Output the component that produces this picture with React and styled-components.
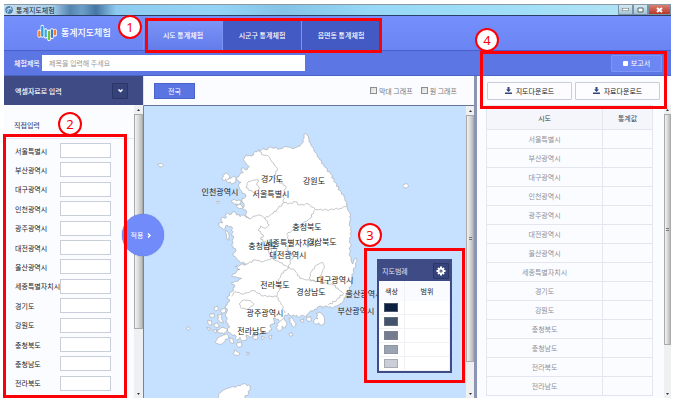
import React from 'react';
import styled, { createGlobalStyle } from 'styled-components';

const NAVY = '#3e4b84';
const RED = '#fb0007';

const GlobalStyle = createGlobalStyle`
  * { box-sizing: border-box; }
  body { margin: 0; background: #fff; }
  body, button, input, table {
    font-family: "Noto Sans CJK KR", "Noto Sans", sans-serif;
    font-size: 7px;
    line-height: 10px;
    color: #222;
  }
  button { padding: 0; border: 0; cursor: pointer; }
`;

const Frame = styled.div`
  height: 100vh;
  padding: 4px 4px 3px;
  display: flex;
  flex-direction: column;
`;

/* ---------- title bar ---------- */
const TitleBar = styled.header`
  flex: none;
  height: 12px;
  display: flex;
  align-items: center;
  gap: 3px;
  padding-left: 1px;
  border-top: 1px solid #8a9aa5;
  border-bottom: 1px solid #2b3f66;
  background: linear-gradient(90deg, #c3dcf0 0, #a9cfec 48px, #5585b0 66px, #6b9fc8 78px, #4676a5 92px, #8ecbf0 112px, #93d3f5 32%, #84c3e6 42%, #96d8f6 55%, #a3e0f7 80%, #b9e3f3 100%);
`;
const TitleText = styled.h1`
  flex: 1;
  margin: 0;
  font-size: 7px;
  font-weight: 400;
  line-height: 9px;
  color: #222;
`;
const WindowButtons = styled.div`
  display: flex;
  align-self: stretch;
`;
const WindowButton = styled.button`
  width: ${(p) => (p.$close ? 23 : 15)}px;
  display: grid;
  place-items: center;
  border: 1px solid #7893a6;
  border-top: 0;
  background: ${(p) => (p.$close ? 'linear-gradient(#d98072, #b9372b)' : 'linear-gradient(#d5e9f3, #a3c3d6)')};
`;

/* ---------- brand and tabs ---------- */
const Brand = styled.div`
  flex: none;
  height: 35px;
  display: flex;
  background: linear-gradient(#758ffb, #6a84f3);
  border-bottom: 1px solid #4a60c8;
`;
const Logo = styled.div`
  width: 139px;
  display: flex;
  align-items: center;
  gap: 4px;
  padding: 0 0 1px 33px;
  color: #fff;
  font-size: 9px;
  line-height: 14px;
  font-weight: 500;
`;
const TabsArea = styled.div`
  position: relative;
  padding-top: 4px;
`;
const Tabs = styled.nav`
  height: 30px;
  display: flex;
`;
const Tab = styled.button`
  width: 79px;
  border-radius: 3px 3px 0 0;
  border-left: 1px solid #7c94f5;
  font-weight: 500;
  color: #fff;
  background: ${(p) => (p.$active ? 'linear-gradient(#7d94f7, #627cea)' : '#4359c4')};
`;

/* ---------- subject bar ---------- */
const SubjectBar = styled.div`
  flex: none;
  height: 25px;
  display: flex;
  align-items: center;
  gap: 4px;
  padding: 0 9px 0 10px;
  background: #5c77e3;
  border-bottom: 1px solid #4c63c6;
`;
const SubjectLabel = styled.label`
  width: 24px;
  color: #fff;
  font-weight: 500;
  white-space: nowrap;
`;
const SubjectInput = styled.input`
  width: 263px;
  height: 16px;
  padding: 0 7px;
  border: 0;
  background: #fff;
  &::placeholder { color: #999; opacity: 1; }
`;
const ReportButton = styled.button`
  width: 51px;
  height: 17px;
  margin-left: auto;
  display: flex;
  align-items: center;
  justify-content: center;
  gap: 3px;
  border: 1px solid #7f95f3;
  border-radius: 1px;
  background: #6c86f3;
  color: #fff;
`;
const ReportDot = styled.span`
  width: 5px;
  height: 5px;
  border-radius: 1px;
  background: #fff;
`;

/* ---------- columns ---------- */
const Columns = styled.main`
  flex: 1;
  min-height: 0;
  display: grid;
  grid-template-columns: 139px minmax(0, 1fr) 194px;
`;
const Column = styled.section`
  position: relative;
  min-height: 0;
  display: flex;
  flex-direction: column;
  background: #fbfcff;
  border-right: ${(p) => (p.$divided ? '3px solid #8b94b3' : '0')};
`;
const ScrollRow = styled.div`
  flex: 1;
  min-height: 0;
  display: flex;
`;

/* ---------- scroll bar ---------- */
const Track = styled.div`
  flex: none;
  width: ${(p) => p.$width}px;
  display: flex;
  flex-direction: column;
  background: #eff0f1;
`;
const Arrow = styled.span`
  flex: none;
  height: 9px;
  display: grid;
  place-items: center;
`;
const Thumb = styled.span`
  flex: ${(p) => p.$share} 0 0;
  display: grid;
  place-items: center;
  border: 1px solid #aaa;
  background: linear-gradient(90deg, #f2f2f2, #dcdcdc 45%, #b9b9b9);
`;
const Rest = styled.span`
  flex: ${(p) => p.$share} 0 0;
`;
const Grip = styled.span`
  width: 3px;
  height: 3px;
  border-top: 1px solid #777;
  border-bottom: 1px solid #777;
`;

/* ---------- input panel ---------- */
const ExcelHeader = styled.div`
  flex: none;
  height: 29px;
  display: flex;
  align-items: center;
  justify-content: space-between;
  padding: 0 15px 0 11px;
  background: ${NAVY};
  color: #fff;
  font-weight: 500;
`;
const SquareButton = styled.button`
  width: 16px;
  height: 16px;
  display: grid;
  place-items: center;
  border: 1px solid #2a3568;
  border-radius: 1px;
  background: #36437b;
`;
const FormArea = styled.div`
  flex: 1;
  display: flex;
  flex-direction: column;
`;
const FormTitle = styled.h2`
  flex: none;
  height: 34px;
  margin: 0;
  padding: 15px 0 0 10px;
  font-size: 7px;
  line-height: 10px;
  font-weight: 500;
  color: ${NAVY};
  border-bottom: 1px solid #e6e9f2;
`;
const RegionForm = styled.form`
  position: relative;
  flex: 1;
  display: flex;
  flex-direction: column;
  justify-content: space-between;
  padding: 4px 0 7px 11px;
`;
const RegionRow = styled.div`
  display: grid;
  grid-template-columns: 45px 51px;
  align-items: center;
`;
const RegionLabel = styled.label`
  white-space: nowrap;
`;
const RegionInput = styled.input`
  width: 100%;
  height: 15px;
  padding: 0 3px;
  border: 1px solid #c9cedb;
  background: #fff;
`;
const ApplyButton = styled.button`
  position: absolute;
  z-index: 2;
  right: -21px;
  top: 138px;
  width: 42px;
  height: 42px;
  display: flex;
  align-items: center;
  justify-content: center;
  gap: 4px;
  padding-right: 4px;
  border-radius: 50%;
  background: #728bfa;
  box-shadow: 0 0 1px #4d62b8;
  color: #fff;
`;

/* ---------- map panel ---------- */
const MapToolbar = styled.div`
  flex: none;
  height: 30px;
  display: flex;
  align-items: center;
  gap: 8px;
  padding: 0 17px 0 10px;
  border-left: 1px solid #dde1ee;
  border-bottom: 1px solid #68739c;
`;
const NationButton = styled.button`
  width: 41px;
  height: 16px;
  margin-right: auto;
  border: 1px solid #4b63cb;
  background: #5a74e2;
  color: #fff;
`;
const GraphOption = styled.label`
  display: flex;
  align-items: center;
  gap: 2px;
  color: #777;
`;
const CheckBox = styled.input`
  appearance: none;
  width: 7px;
  height: 7px;
  margin: 0;
  border: 1px solid #8d8d8d;
  background: linear-gradient(135deg, #d5d8da, #f8f8f8);
  &:checked { background: ${NAVY}; }
`;
const Sea = styled.div`
  position: relative;
  flex: 1;
  min-width: 0;
  overflow: hidden;
  display: flex;
  justify-content: center;
  border-left: 1px solid #7782ab;
  background: #c6e0ff;
`;
const MapCanvas = styled.div`
  position: relative;
  flex: none;
  width: 324px;
  height: 292px;
`;
const MapLabel = styled.span`
  position: absolute;
  left: ${(p) => p.$x}px;
  top: ${(p) => p.$y}px;
  transform: translate(-50%, -50%);
  font-size: 8px;
  line-height: 10px;
  white-space: nowrap;
  color: #222;
`;

/* ---------- legend ---------- */
const LegendArea = styled.div`
  position: absolute;
  z-index: 2;
  right: 22px;
  bottom: 25px;
  width: 75px;
`;
const LegendCard = styled.div`
  border: 2px solid ${NAVY};
  background: #fff;
`;
const LegendHeader = styled.div`
  height: 20px;
  display: flex;
  align-items: center;
  justify-content: space-between;
  padding: 0 1px 0 3px;
  background: ${NAVY};
  color: #dfe4f8;
`;
const LegendTable = styled.table`
  width: 100%;
  table-layout: fixed;
  border-collapse: collapse;
`;
const LegendHead = styled.th`
  width: ${(p) => p.$width};
  height: 20px;
  padding: 0;
  font-weight: 400;
  background: #fafbff;
  border-right: 1px solid #f0f1f5;
`;
const LegendCell = styled.td`
  height: 14px;
  padding: 0 0 0 5px;
  border-right: 1px solid #f0f1f5;
  border-bottom: 1px solid #f0f1f5;
`;
const Swatch = styled.span`
  display: block;
  width: 14px;
  height: 9px;
  border: 1px solid rgba(130, 135, 150, 0.5);
  background: ${(p) => p.$color};
`;

/* ---------- result panel ---------- */
const Downloads = styled.div`
  flex: none;
  height: 29px;
  display: grid;
  grid-template-columns: 1fr 1fr;
  align-items: center;
  gap: 3px;
  padding: 0 11px 0 10px;
`;
const DownloadButton = styled.button`
  height: 18px;
  display: flex;
  align-items: center;
  justify-content: center;
  gap: 4px;
  border: 1px solid #c8cddb;
  border-radius: 1px;
  background: #fdfdff;
`;
const TableArea = styled.div`
  flex: 1;
  min-width: 0;
  overflow: hidden;
  padding: 0 11px 0 9px;
`;
const ResultTable = styled.table`
  width: 100%;
  table-layout: fixed;
  border-collapse: collapse;
  text-align: center;
`;
const ResultHead = styled.th`
  width: ${(p) => p.$width};
  height: 24px;
  padding: 0;
  font-weight: 400;
  color: #444;
  background: #f5f6fb;
  border: 1px solid #e4e6ef;
`;
const ResultCell = styled.td`
  height: 19px;
  padding: 0;
  color: #8e9098;
  border: 1px solid #e4e6ef;
`;

/* ---------- numbered call-outs ---------- */
const Callout = styled.div`
  position: absolute;
  z-index: 5;
  top: ${(p) => p.$top}px;
  right: ${(p) => p.$right}px;
  bottom: ${(p) => p.$bottom};
  left: ${(p) => p.$left}px;
  height: ${(p) => p.$height || 'auto'};
  border: 3px solid ${RED};
  pointer-events: none;
`;
const Badge = styled.span`
  position: absolute;
  left: ${(p) => p.$x}px;
  top: ${(p) => p.$y}px;
  width: 24px;
  height: 24px;
  display: grid;
  place-items: center;
  border: 2px solid ${RED};
  border-radius: 50%;
  background: #fff;
  color: ${RED};
  font-family: "Noto Sans", sans-serif;
  font-size: 13px;
  line-height: 16px;
`;

const REGIONS = [
  '서울특별시', '부산광역시', '대구광역시', '인천광역시', '광주광역시',
  '대전광역시', '울산광역시', '세종특별자치시', '경기도', '강원도',
  '충청북도', '충청남도', '전라북도', '전라남도',
];

const MAP_LABELS = [
  ['경기도', 129, 73], ['강원도', 171, 75], ['인천광역시', 77, 86], ['서울특별시', 128, 88],
  ['충청북도', 164, 121], ['충청남도', 120, 140], ['세종특별자치시', 148, 137], ['경상북도', 179, 136],
  ['대전광역시', 145, 149], ['전라북도', 132, 179], ['대구광역시', 192, 174], ['경상남도', 168, 186],
  ['울산광역시', 221, 188], ['부산광역시', 213, 205], ['광주광역시', 122, 207], ['전라남도', 109, 225],
];

const LEGEND_COLORS = ['#0c2040', '#435369', '#747c8f', '#9ba4b3', '#cbced6'];

const COAST = '497,100 505,108 507,125 516,140 526,158 540,180 556,203 572,222 586,248 600,272 612,290 620,312 622,325 632,345 629,370 634,395 630,420 631,440 628,460 633,480 638,492 646,474 650,478 647,495 640,512 637,530 634,550 628,570 618,585 612,600 605,610 590,618 575,624 560,618 548,625 540,618 530,628 515,632 505,640 498,650 485,645 475,652 470,645 455,648 445,640 432,652 425,668 415,658 400,655 405,670 390,675 395,690 380,700 370,695 360,705 345,700 330,712 318,705 320,720 305,722 300,712 290,720 285,705 272,700 262,690 270,680 258,668 262,655 255,645 262,632 255,618 268,605 262,590 275,575 285,560 275,548 290,545 305,535 285,530 275,528 290,515 300,508 285,500 300,495 320,492 300,485 292,478 278,462 288,452 275,435 280,415 276,400 278,385 262,375 250,388 238,380 235,370 248,368 243,355 260,352 258,342 275,342 282,335 300,350 310,345 328,357 315,345 320,335 308,325 312,312 300,305 312,295 318,285 308,280 300,268 295,255 303,247 288,238 298,225 310,218 305,205 322,208 328,200 318,190 310,178 318,165 335,168 345,155 355,150 375,148 395,142 420,146 440,140 462,145 480,138 490,125 492,108';

const BORDERS = [
  '355,150 370,165 385,168 395,185 412,205 405,225 410,240 437,258 430,290 432,308',
  '328,357 345,348 360,345 375,355 400,340 415,325 432,308 455,312 465,305 480,315 505,312 525,328 560,330 600,325 620,318',
  '525,330 510,355 490,370 470,385 440,402 450,430 440,450 460,470 450,485 447,503',
  '375,355 388,375 375,385 362,378 355,392 370,405 362,418 380,430 372,445 395,450 390,462 402,480',
  '320,492 345,480 370,485 395,475 420,488 447,503',
  '447,503 425,520 415,545 418,565 410,590 425,615 435,640',
  '275,588 285,575 310,582 340,572 370,588 410,590',
  '447,503 465,512 480,535 500,540 540,545 580,555 610,580 590,600 565,615',
];

const ENCLAVES = [
  '510,520 530,495 548,487 553,500 545,520 530,545 510,538',
  '297,612 310,600 330,602 342,612 325,627 305,625',
  '318,262 325,245 345,240 355,240 350,255 358,265 345,278 330,272',
  '385,440 400,435 410,450 400,465 387,460',
];

const ISLANDS = [
  '248,225 260,218 270,232 262,240 282,228 288,240 280,250 265,248 258,238 248,240',
  '273,303 282,297 290,303 300,300 302,310 290,312 280,308',
  '288,316 300,312 310,322 298,326',
  '54,192 64,190 71,195 64,201 56,197',
  '791,253 800,250 806,258 798,264 791,260',
  '230,304 238,304 236,310 230,308',
  '258,390 266,398 268,420 262,418 260,404',
  '243,628 255,624 258,634 246,640', '223,622 232,618 236,628 226,632',
  '210,642 222,640 224,650 212,652', '232,645 246,642 244,656 250,668 238,664',
  '204,660 214,662 216,674 206,674', '222,672 232,668 238,680 226,682',
  '200,682 212,684 208,692', '218,690 230,688 228,700',
  '226,725 232,714 246,708 260,702 266,712 256,718 250,728 236,732',
  '232,690 250,682 262,688 255,698 240,700',
  '268,712 278,716 282,730 272,728', '290,728 304,726 306,738 294,742',
  '280,760 284,750 292,755 300,762 290,766', '320,756 328,758 324,766',
  '340,708 352,704 354,716 342,718', '365,708 374,712 366,720', '386,708 396,705 392,718',
  '410,672 420,664 430,656 440,668 436,684 426,678 422,692 412,688',
  '446,656 456,652 462,664 468,672 462,682 454,670',
  '480,660 492,656 488,668', '500,652 512,650 514,662 504,664',
  '528,640 540,636 552,650 554,666 545,676 536,668 526,672 522,660 534,656',
  '140,683 146,680 150,685 144,691', '448,700 456,698 458,706 450,708',
  '233,895 240,878 256,868 272,862 290,860 310,852 326,855 330,864 326,880 308,898 234,898',
];

/* Adds small zigzags between the given points so that lines look surveyed. */
function rough(text, amount, closed) {
  const points = text.split(' ').map((pair) => pair.split(',').map(Number));
  const last = closed ? points.length : points.length - 1;
  let d = `M${points[0]}`;
  for (let i = 0; i < last; i += 1) {
    const [ax, ay] = points[i];
    const [bx, by] = points[(i + 1) % points.length];
    const length = Math.hypot(bx - ax, by - ay) || 1;
    const steps = Math.max(2, Math.round(length / 6));
    for (let s = 1; s < steps; s += 1) {
      const wave = Math.sin(i * 12.9 + s * 78.2) * amount;
      const x = ax + ((bx - ax) * s) / steps - ((by - ay) / length) * wave;
      const y = ay + ((by - ay) * s) / steps + ((bx - ax) / length) * wave;
      d += `L${x.toFixed(1)} ${y.toFixed(1)}`;
    }
    d += `L${bx} ${by}`;
  }
  return closed ? `${d}Z` : d;
}

function KoreaMap() {
  return (
    <svg width="324" height="292" viewBox="9 18 972 876" aria-hidden="true" display="block">
      <g fill="#fff" stroke="#a9abae" strokeWidth="2" strokeLinejoin="round">
        <path d={rough(COAST, 3, true)} />
        {ISLANDS.map((shape) => <path key={shape} d={rough(shape, 3, true)} />)}
        {ENCLAVES.map((shape) => <path key={shape} d={rough(shape, 2, true)} />)}
        <g fill="none">
          {BORDERS.map((line) => <path key={line} d={rough(line, 3, false)} />)}
        </g>
      </g>
    </svg>
  );
}

function LogoMark() {
  return (
    <svg width="20" height="18" viewBox="0 0 60 54" aria-hidden="true">
      <g stroke="#fff" strokeWidth="11" strokeLinecap="round">
        <path d="M7 22v14M16 8v28M26 18v20M36 22v24M45 18v22M54 20v12" />
      </g>
      <g strokeWidth="7" strokeLinecap="round">
        <path d="M7 23v12M54 20v11" stroke="#f47c2c" />
        <path d="M16 9v26" stroke="#2d9be0" />
        <path d="M26 19v18" stroke="#3aa9dc" />
        <path d="M36 24v21" stroke="#74bd3d" />
        <path d="M45 19v20" stroke="#3b7cd0" />
      </g>
    </svg>
  );
}

function DownloadIcon() {
  return (
    <svg width="7" height="7" viewBox="0 0 14 14" aria-hidden="true">
      <path d="M5 0h4v5h3l-5 5-5-5h3zM0 11h14v3H0z" fill="#33467f" />
    </svg>
  );
}

function GearIcon() {
  return (
    <svg width="10" height="10" viewBox="0 0 20 20" aria-hidden="true">
      <g stroke="#fff" strokeWidth="4">
        <path d="M10 1v18M1 10h18M4 4l12 12M16 4L4 16" />
      </g>
      <circle cx="10" cy="10" r="6" fill="#fff" />
      <circle cx="10" cy="10" r="3" fill={NAVY} />
      <circle cx="10" cy="10" r="1" fill="#fff" />
    </svg>
  );
}

function ScrollBar({ width, share }) {
  return (
    <Track $width={width} aria-hidden="true">
      <Arrow><svg width="3" height="2" viewBox="0 0 6 4"><path d="M0 4l3-4 3 4z" fill="#333" /></svg></Arrow>
      <Thumb $share={share}><Grip /></Thumb>
      <Rest $share={100 - share} />
      <Arrow><svg width="3" height="2" viewBox="0 0 6 4"><path d="M0 0l3 4 3-4z" fill="#333" /></svg></Arrow>
    </Track>
  );
}

function Legend() {
  return (
    <LegendArea>
      <LegendCard>
        <LegendHeader>
          지도범례
          <SquareButton type="button" aria-label="범례 설정"><GearIcon /></SquareButton>
        </LegendHeader>
        <LegendTable>
          <thead>
            <tr>
              <LegendHead $width="36%">색상</LegendHead>
              <LegendHead $width="64%">범위</LegendHead>
            </tr>
          </thead>
          <tbody>
            {LEGEND_COLORS.map((color) => (
              <tr key={color}>
                <LegendCell><Swatch $color={color} /></LegendCell>
                <LegendCell />
              </tr>
            ))}
          </tbody>
        </LegendTable>
      </LegendCard>
      <Callout $top={-11} $right={-13} $bottom="-10px" $left={-13}>
        <Badge $x={-9} $y={-28}>3</Badge>
      </Callout>
    </LegendArea>
  );
}

export default function App() {
  return (
    <Frame>
      <GlobalStyle />
      <TitleBar>
        <svg width="8" height="8" viewBox="0 0 16 16" aria-hidden="true">
          <circle cx="8" cy="8" r="7" fill="#4c86b8" stroke="#2d5678" />
          <path d="M2 9c4-5 8-5 12-2M5 13c2-6 4-8 7-10" fill="none" stroke="#d9ecf8" strokeWidth="2" />
        </svg>
        <TitleText>통계지도체험</TitleText>
        <WindowButtons>
          <WindowButton type="button" aria-label="최소화">
            <svg width="7" height="3"><path d="M0 0h7v3H0z" fill="#fff" stroke="#566" /></svg>
          </WindowButton>
          <WindowButton type="button" aria-label="최대화">
            <svg width="7" height="6"><path d="M1 1h5v4H1z" fill="#fff" stroke="#566" /></svg>
          </WindowButton>
          <WindowButton type="button" aria-label="닫기" $close>
            <svg width="7" height="6"><path d="M1 1l5 4M6 1L1 5" stroke="#fff" strokeWidth="2" /></svg>
          </WindowButton>
        </WindowButtons>
      </TitleBar>

      <Brand>
        <Logo><LogoMark />통계지도체험</Logo>
        <TabsArea>
          <Tabs>
            <Tab type="button" $active>시도 통계체험</Tab>
            <Tab type="button">시군구 통계체험</Tab>
            <Tab type="button">읍면동 통계체험</Tab>
          </Tabs>
          <Callout $top={2} $right={-2} $bottom="-3px" $left={2}>
            <Badge $x={-30} $y={-6}>1</Badge>
          </Callout>
        </TabsArea>
      </Brand>

      <SubjectBar>
        <SubjectLabel htmlFor="subject">체험제목</SubjectLabel>
        <SubjectInput id="subject" placeholder="제목을 입력해 주세요" />
        <ReportButton type="button"><ReportDot />보고서</ReportButton>
      </SubjectBar>

      <Columns>
        <Column>
          <ExcelHeader>
            엑셀자료로 입력
            <SquareButton type="button" aria-label="펼치기">
              <svg width="5" height="4" viewBox="0 0 10 8"><path d="M1 1l4 4 4-4" fill="none" stroke="#fff" strokeWidth="3" /></svg>
            </SquareButton>
          </ExcelHeader>
          <ScrollRow>
            <FormArea>
              <FormTitle>직접입력</FormTitle>
              <RegionForm>
                {REGIONS.slice(0, 13).map((name, i) => (
                  <RegionRow key={name}>
                    <RegionLabel htmlFor={`region-${i}`}>{name}</RegionLabel>
                    <RegionInput id={`region-${i}`} />
                  </RegionRow>
                ))}
                <Callout $top={-5} $right={7} $bottom="0" $left={-1}>
                  <Badge $x={52} $y={-25}>2</Badge>
                </Callout>
              </RegionForm>
            </FormArea>
            <ScrollBar width={9} share={78} />
          </ScrollRow>
          <ApplyButton type="button">
            적용
            <svg width="4" height="5" viewBox="0 0 8 10"><path d="M2 1l4 4-4 4" fill="none" stroke="#fff" strokeWidth="3" /></svg>
          </ApplyButton>
        </Column>

        <Column $divided>
          <MapToolbar>
            <NationButton type="button">전국</NationButton>
            <GraphOption><CheckBox type="checkbox" />막대 그래프</GraphOption>
            <GraphOption><CheckBox type="checkbox" />원 그래프</GraphOption>
          </MapToolbar>
          <ScrollRow>
            <Sea>
              <MapCanvas>
                <KoreaMap />
                {MAP_LABELS.map(([name, x, y]) => (
                  <MapLabel key={name} $x={x} $y={y}>{name}</MapLabel>
                ))}
              </MapCanvas>
            </Sea>
            <ScrollBar width={8} share={90} />
          </ScrollRow>
          <Legend />
        </Column>

        <Column>
          <Downloads>
            <DownloadButton type="button"><DownloadIcon />지도다운로드</DownloadButton>
            <DownloadButton type="button"><DownloadIcon />자료다운로드</DownloadButton>
          </Downloads>
          <ScrollRow>
            <TableArea>
              <ResultTable>
                <thead>
                  <tr>
                    <ResultHead $width="70%">시도</ResultHead>
                    <ResultHead $width="30%">통계값</ResultHead>
                  </tr>
                </thead>
                <tbody>
                  {REGIONS.map((name) => (
                    <tr key={name}>
                      <ResultCell>{name}</ResultCell>
                      <ResultCell />
                    </tr>
                  ))}
                </tbody>
              </ResultTable>
            </TableArea>
            <ScrollBar width={7} share={84} />
          </ScrollRow>
          <Callout $top={-25} $right={4} $bottom="auto" $left={3} $height="58px">
            <Badge $x={-8} $y={-26}>4</Badge>
          </Callout>
        </Column>
      </Columns>
    </Frame>
  );
}
